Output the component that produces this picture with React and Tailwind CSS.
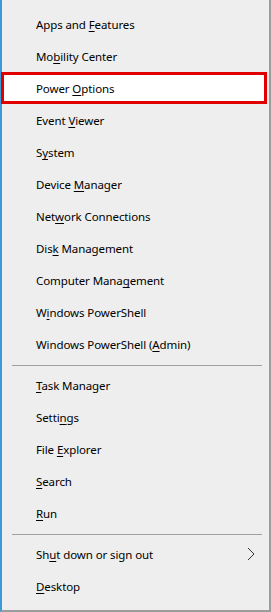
import React from "react";

const groups = [
  [
    ["Apps and ", "F", "eatures"],
    ["Mo", "b", "ility Center"],
    ["Power ", "O", "ptions"],
    ["Event ", "V", "iewer"],
    ["S", "y", "stem"],
    ["Device ", "M", "anager"],
    ["Net", "w", "ork Connections"],
    ["Dis", "k", " Management"],
    ["Computer Mana", "g", "ement"],
    ["W", "i", "ndows PowerShell"],
    ["Windows PowerShell (", "A", "dmin)"],
  ],
  [
    ["", "T", "ask Manager"],
    ["Setti", "n", "gs"],
    ["File ", "E", "xplorer"],
    ["", "S", "earch"],
    ["", "R", "un"],
  ],
  [
    ["Sh", "u", "t down or sign out"],
    ["", "D", "esktop"],
  ],
];

function Item({ parts, active, sub }) {
  const [a, key, b] = parts;
  return (
    <div
      className={`flex h-[32px] items-center pr-3 ${
        active
          ? "ml-[-1px] mr-[2px] border-[3px] border-[#e00000] bg-white pl-[32px]"
          : "pl-[34px]"
      }`}
    >
      <span className="flex-1 whitespace-nowrap pt-[2px]">
        {a}
        <u className="underline-offset-2">{key}</u>
        {b}
      </span>
      {sub && (
        <svg width="8" height="14" viewBox="0 0 8 14" className="mr-[2px]">
          <path d="M1 1 L7 7 L1 13" fill="none" stroke="#333" strokeWidth="1" />
        </svg>
      )}
    </div>
  );
}

export default function App() {
  return (
    <div
      className="h-[612px] w-[271px] border-l-2 border-r-2 border-b-2 border-l-[#3c9ad6] border-r-[#9c9c9c] border-b-[#9c9c9c] bg-[#eeeeee] pt-2 text-[11.5px] tracking-[-0.1px] text-black"
      style={{ fontFamily: '"Noto Sans", "Open Sans", sans-serif' }}
    >
      {groups.map((g, gi) => (
        <div key={gi}>
          {gi > 0 && (
            <div className="pb-[3px] pt-[5px] pl-[10px] pr-[7px]">
              <div className="h-px bg-[#a0a0a0]" />
            </div>
          )}
          {g.map((p, i) => (
            <Item
              key={i}
              parts={p}
              active={gi === 0 && i === 2}
              sub={gi === 2 && i === 0}
            />
          ))}
        </div>
      ))}
    </div>
  );
}
